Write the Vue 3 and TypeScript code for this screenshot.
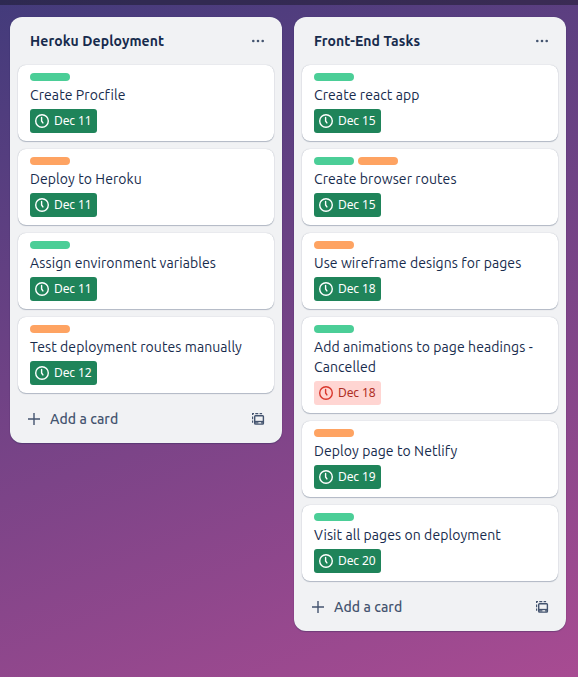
<script setup lang="ts">
type Label = 'green' | 'orange'

interface Card {
  labels: Label[]
  title: string
  due: string
  overdue?: boolean
}

interface List {
  name: string
  cards: Card[]
}

const lists: List[] = [
  {
    name: 'Heroku Deployment',
    cards: [
      { labels: ['green'], title: 'Create Procfile', due: 'Dec 11' },
      { labels: ['orange'], title: 'Deploy to Heroku', due: 'Dec 11' },
      { labels: ['green'], title: 'Assign environment variables', due: 'Dec 11' },
      { labels: ['orange'], title: 'Test deployment routes manually', due: 'Dec 12' },
    ],
  },
  {
    name: 'Front-End Tasks',
    cards: [
      { labels: ['green'], title: 'Create react app', due: 'Dec 15' },
      { labels: ['green', 'orange'], title: 'Create browser routes', due: 'Dec 15' },
      { labels: ['orange'], title: 'Use wireframe designs for pages', due: 'Dec 18' },
      { labels: ['green'], title: 'Add animations to page headings - Cancelled', due: 'Dec 18', overdue: true },
      { labels: ['orange'], title: 'Deploy page to Netlify', due: 'Dec 19' },
      { labels: ['green'], title: 'Visit all pages on deployment', due: 'Dec 20' },
    ],
  },
]
</script>

<template>
  <div class="board">
    <div class="topbar"></div>
    <main class="lists">
      <section v-for="list in lists" :key="list.name" class="list">
        <header class="list-header">
          <h2>{{ list.name }}</h2>
          <button class="icon-button" aria-label="List actions">
            <svg width="16" height="16" viewBox="0 0 16 16" fill="currentColor">
              <circle cx="3.3" cy="8" r="1.3" /><circle cx="8" cy="8" r="1.3" /><circle cx="12.7" cy="8" r="1.3" />
            </svg>
          </button>
        </header>
        <div class="cards">
          <article v-for="card in list.cards" :key="card.title" class="card">
            <div class="labels">
              <span v-for="label in card.labels" :key="label" class="label" :class="label"></span>
            </div>
            <p class="title">{{ card.title }}</p>
            <span class="due" :class="{ overdue: card.overdue }">
              <svg width="16" height="16" viewBox="0 0 16 16" fill="none" stroke="currentColor">
                <circle cx="8" cy="8" r="6.3" stroke-width="1.4" />
                <path d="M7.6 4.5V8L8.9 9.9" stroke-width="1.4" stroke-linecap="round" stroke-linejoin="round" />
              </svg>
              <span class="date">{{ card.due }}</span>
            </span>
          </article>
        </div>
        <footer class="list-footer">
          <button class="add">
            <svg width="16" height="16" viewBox="0 0 16 16" fill="none" stroke="currentColor">
              <path d="M8 2v12M2 8h12" stroke-width="1.4" />
            </svg>
            <span>Add a card</span>
          </button>
          <button class="icon-button" aria-label="Create from template">
            <svg width="16" height="16" viewBox="0 0 16 16" fill="none" stroke="currentColor">
              <path d="M2 2.6h2M5.3 2.6h3M9.6 2.6h2.5M2.6 2v2M2.6 5.5v2.7M2.6 9.6v2.1" stroke-width="1.2" />
              <rect x="4.7" y="4.7" width="8.7" height="8.4" rx="0.8" stroke-width="1.4" />
              <path d="M4.5 10.5h9" stroke-width="1.3" />
              <path d="M5 11.9h3.4M11 11.9h2" stroke-width="1.2" />
            </svg>
          </button>
        </footer>
      </section>
    </main>
  </div>
</template>

<style>
body {
  margin: 0;
}
</style>

<style scoped>
.board {
  box-sizing: border-box;
  width: 578px;
  height: 677px;
  overflow: hidden;
  background: linear-gradient(160deg, #433b7b 0%, #a84b92 100%);
  color: #172b4d;
  font-family: Ubuntu, 'Noto Sans', sans-serif;
  font-size: 14px;
  line-height: 20px;
}

.topbar {
  height: 5px;
  background: rgba(20, 20, 30, 0.45);
}

.lists {
  display: flex;
  align-items: flex-start;
  gap: 12px;
  padding: 12px 10px;
}

.list {
  flex: 0 0 272px;
  border-radius: 12px;
  background: #f1f2f4;
  box-shadow: 0 1px 1px #091e4240, 0 0 1px #091e424f;
}

.list-header {
  display: flex;
  align-items: center;
  justify-content: space-between;
  height: 48px;
  padding: 0 8px 0 20px;
  box-sizing: border-box;
}

h2 {
  margin: 0;
  font-size: 14px;
  font-weight: 700;
  line-height: 20px;
  letter-spacing: 0.1px;
}

button {
  padding: 0;
  border: 0;
  background: none;
  color: #44546f;
  font: inherit;
}

.icon-button {
  display: grid;
  place-items: center;
  width: 32px;
  height: 32px;
}

.cards {
  display: flex;
  flex-direction: column;
  gap: 8px;
  padding: 0 8px;
}

.card {
  padding: 8px 12px;
  border-radius: 8px;
  background: #fff;
  box-shadow: 0 1px 1px #091e4240, 0 0 1px #091e424f;
}

.labels {
  display: flex;
  gap: 4px;
  margin-bottom: 4px;
}

.label {
  width: 40px;
  height: 8px;
  border-radius: 4px;
}

.green {
  background: #4bce97;
}

.orange {
  background: #fea362;
}

.title {
  margin: 0 0 4px;
  letter-spacing: 0.085px;
}

.due {
  display: flex;
  align-items: center;
  gap: 4px;
  box-sizing: border-box;
  width: 67px;
  height: 24px;
  padding: 0 4px;
  border-radius: 3px;
  background: #1f845a;
  color: #fff;
  font-size: 12px;
  white-space: nowrap;
}

.due.overdue {
  background: #ffd5d2;
  color: #ae2e24;
}

.overdue svg {
  color: #d9372d;
}

.date {
  font-family: 'Noto Sans', sans-serif;
  letter-spacing: -0.1px;
}

.list-footer {
  display: flex;
  align-items: center;
  justify-content: space-between;
  height: 50px;
  padding: 2px 8px 0 16px;
  box-sizing: border-box;
}

.add {
  display: flex;
  align-items: center;
  gap: 8px;
  font-weight: 500;
  letter-spacing: 0.08px;
}
</style>
